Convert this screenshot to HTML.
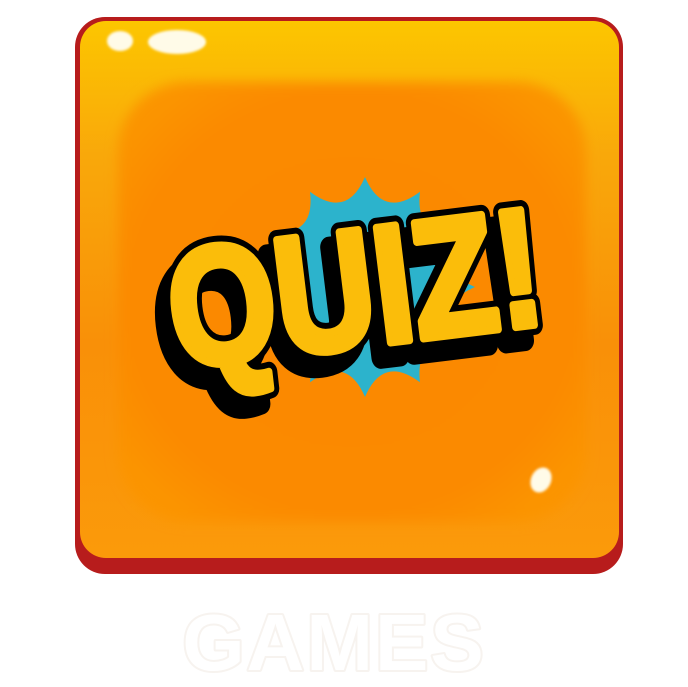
<!DOCTYPE html>
<html><head><meta charset="utf-8"><style>
html,body{margin:0;padding:0;background:#fff;width:688px;height:687px;overflow:hidden}
.t{font-family:"Liberation Sans","DejaVu Sans",sans-serif;font-weight:bold}
</style></head><body>
<svg width="688" height="687" viewBox="0 0 688 687" xmlns="http://www.w3.org/2000/svg">
<defs>
<linearGradient id="g" x1="0" y1="0" x2="0" y2="1">
<stop offset="0" stop-color="#fcc600"/>
<stop offset="0.25" stop-color="#f9a80a"/>
<stop offset="0.6" stop-color="#f99008"/>
<stop offset="1" stop-color="#fb9a0a"/>
</linearGradient>
<radialGradient id="inner" cx="0.5" cy="0.5" r="0.6">
<stop offset="0" stop-color="#fb8800"/>
<stop offset="0.8" stop-color="#fb8a02"/>
<stop offset="1" stop-color="#fb9406"/>
</radialGradient>
<filter id="blur"><feGaussianBlur stdDeviation="6"/></filter>
<filter id="b2"><feGaussianBlur stdDeviation="1.2"/></filter>
</defs>
<rect x="75" y="17" width="548" height="557" rx="30" fill="#b71c1c"/>
<rect x="80" y="21" width="539" height="537" rx="26" fill="url(#g)"/>
<rect x="118" y="82" width="468" height="440" rx="70" fill="url(#inner)" filter="url(#blur)"/>
<ellipse cx="120" cy="41" rx="13" ry="10" fill="#fffbe8" filter="url(#b2)"/>
<ellipse cx="177" cy="42" rx="29" ry="12" fill="#fffbe8" filter="url(#b2)"/>
<ellipse cx="541" cy="480" rx="10" ry="13" transform="rotate(25 541 480)" fill="#fffbe8" filter="url(#b2)"/>
<path fill="#2cb3cc" d="M475,287 Q432.6,268.9 460.3,232 Q414.5,237.5 420,191.7 Q383.1,219.4 365,177 Q346.9,219.4 310,191.7 Q315.5,237.5 269.7,232 Q297.4,268.9 255,287 Q297.4,305.1 269.7,342 Q315.5,336.5 310,382.3 Q346.9,354.6 365,397 Q383.1,354.6 420,382.3 Q414.5,336.5 460.3,342 Q432.6,305.1 475,287Z"/>
<g class="t" transform="translate(362,346) rotate(-7) scale(0.82,1)" font-size="168" text-anchor="middle" stroke-linejoin="round">
<text x="-14" y="14" fill="#000" stroke="#000" stroke-width="22">QUIZ!</text>
<text x="0" y="0" fill="#000" stroke="#000" stroke-width="20">QUIZ!</text>
<text x="0" y="0" fill="#fbbd0a" stroke="#fbbd0a" stroke-width="8">QUIZ!</text>
</g>
<text class="t" x="334" y="670" text-anchor="middle" font-size="80" letter-spacing="2" fill="#fff" stroke="#f7f3ef" stroke-width="4" stroke-linejoin="round" paint-order="stroke">GAMES</text>
</svg>
</body></html>
